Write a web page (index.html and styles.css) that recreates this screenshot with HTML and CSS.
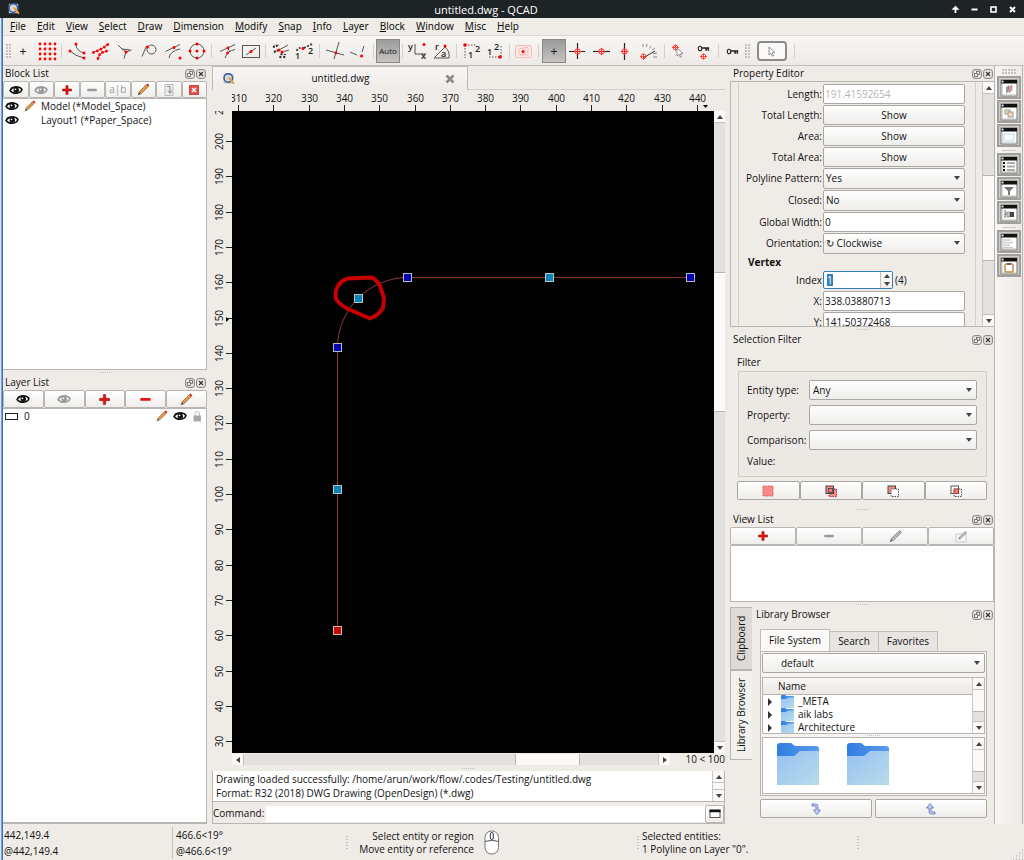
FILE: index.html
```html
<!DOCTYPE html>
<html lang="en">
<head>
<meta charset="utf-8">
<title>untitled.dwg - QCAD</title>
<link rel="stylesheet" href="styles.css">
</head>
<body>
<svg class="defs" aria-hidden="true">
  <defs>
    <linearGradient id="folderFront" x1="0" y1="0" x2="1" y2="1"><stop offset="0" stop-color="#98c1f3"/><stop offset="1" stop-color="#b6dcea"/></linearGradient>
    <linearGradient id="folderBack" x1="0" y1="0" x2="1" y2="0"><stop offset="0" stop-color="#2f7de0"/><stop offset="1" stop-color="#5b9bee"/></linearGradient>
    <symbol id="eye" viewBox="0 0 14 10"><path d="M1 5.500C3 1.600 10.500 .6 13 4.500 11.500 9 4 9.600 1 5.500Z" fill="none" stroke="currentColor" stroke-width="1.500"/><path d="M1 3.500C4 .3 10 .2 13.300 4.200L11 3Z" fill="currentColor"/><circle cx="7.300" cy="5.200" r="2.700" fill="currentColor"/><circle cx="6.500" cy="4.400" r=".8" fill="#fff"/></symbol>
    <symbol id="plus" viewBox="0 0 10 10"><path d="M3.900 .5h2.200v3.400h3.400v2.200H6.100v3.400H3.900V6.100H.5V3.900h3.400Z" fill="#e8100c" stroke="#8d1713" stroke-width=".5"/></symbol>
    <symbol id="minus" viewBox="0 0 10 10"><rect x=".3" y="3.700" width="9.400" height="2.500" rx=".5" fill="currentColor"/></symbol>
    <symbol id="pencil" viewBox="0 0 12 12"><path d="M.6 11.400 1.800 8.400 3.500 10.100Z" fill="#443"/><path d="M1.800 8.400 8.600 1.500 10.400 3.300 3.500 10.100Z" fill="#e89a45" stroke="#7d4f20" stroke-width=".6"/><path d="M8.600 1.500 9.800 .4 11.500 2.200 10.400 3.300Z" fill="#d3241d"/></symbol>
    <symbol id="pencilGray" viewBox="0 0 12 12"><path d="M.6 11.400 1.800 8.400 3.500 10.100Z" fill="#666"/><path d="M1.800 8.400 9.800 .4 11.500 2.200 3.500 10.100Z" fill="#bbb" stroke="#777" stroke-width=".7"/></symbol>
    <symbol id="float" viewBox="0 0 10 10"><rect x=".7" y=".7" width="8.600" height="8.600" rx="2" fill="none" stroke="#777"/><rect x="4.500" y="2.500" width="3" height="3" fill="none" stroke="#666" stroke-width=".8"/><rect x="2.500" y="4.500" width="3" height="3" fill="#eee" stroke="#666" stroke-width=".8"/></symbol>
    <symbol id="close" viewBox="0 0 10 10"><rect x=".7" y=".7" width="8.600" height="8.600" rx="2" fill="none" stroke="#777"/><path d="M3 3l4 4M7 3l-4 4" stroke="#333" stroke-width="1.200"/></symbol>
    <symbol id="folder" viewBox="0 0 42 42"><path d="M0 3Q0 0 3 0H14L18 3H39Q42 3 42 6V30H0Z" fill="url(#folderBack)"/><path d="M0 13H17L23 8H42V42H0Z" fill="url(#folderFront)"/></symbol>
    <symbol id="logo" viewBox="0 0 14 14"><rect x="2" y="2" width="9" height="9" fill="#d9d9dc" stroke="#9a9aa5" stroke-width=".5"/><circle cx="6.300" cy="6" r="4.300" fill="none" stroke="#2f5a9c" stroke-width="1.500"/><path d="M6 5l2 .5 4.500 5.500-1 1.500L6.500 7Z" fill="#e6a23a"/></symbol>
    <symbol id="target" viewBox="0 0 8 8"><circle cx="4" cy="4" r="2.700" fill="none" stroke="#f22" stroke-width=".9"/><path d="M0 4h8M4 .5v7" stroke="#f22" stroke-width=".9"/></symbol>
    <symbol id="key" viewBox="0 0 14 8"><ellipse cx="3" cy="4" rx="2" ry="2.600" fill="none" stroke="#222" stroke-width="1.300"/><path d="M5 3.500h8.500M10 3.500v3M12.500 3.500v3" stroke="#222" stroke-width="1.800"/></symbol>
    <symbol id="pointer" viewBox="0 0 8 11"><path d="M1 1v8l2-1.700 1.300 2.900 1.200-.6L4.300 6.800 7 6.500Z" fill="#fff" stroke="#777" stroke-width=".8"/></symbol>
    <symbol id="win" viewBox="0 0 18 18"><rect x="1" y="1" width="16" height="16" fill="#fff" stroke="#777"/><rect x="1" y="1" width="16" height="3.500" fill="#111"/><rect x="1.500" y="1.500" width="2" height="2" fill="#eee"/><path d="M2 5v11h14" stroke="#bbb" fill="none"/></symbol>
  </defs>
</svg>

<header class="titlebar">
  <svg class="app-icon" width="14" height="14"><use href="#logo"/></svg>
  <h1>untitled.dwg - QCAD</h1>
  <div class="window-buttons">
    <button aria-label="Keep above"><svg width="9" height="9"><path d="M4.500 .8 8.500 4.800H.5Z" fill="#fff"/><path d="M4.500 3v5" stroke="#fff" stroke-width="1.800"/></svg></button>
    <button aria-label="Minimize"><svg width="9" height="9"><path d="M1.500 4.500h6" stroke="#fff" stroke-width="2"/></svg></button>
    <button aria-label="Maximize"><svg width="9" height="9"><rect x="2" y="2" width="5" height="5" fill="none" stroke="#fff" stroke-width="1.600"/></svg></button>
    <button aria-label="Close"><svg width="9" height="9"><path d="M2 2l5 5M7 2 2 7" stroke="#fff" stroke-width="1.900"/></svg></button>
  </div>
</header>

<div class="window">
<nav class="menubar">
  <button><u>F</u>ile</button><button><u>E</u>dit</button><button><u>V</u>iew</button><button><u>S</u>elect</button><button><u>D</u>raw</button><button><u>D</u>imension</button><button><u>M</u>odify</button><button><u>S</u>nap</button><button><u>I</u>nfo</button><button><u>L</u>ayer</button><button><u>B</u>lock</button><button><u>W</u>indow</button><button><u>M</u>isc</button><button><u>H</u>elp</button>
</nav>

<div class="toolbar">
  <span class="grip"></span>
  <button aria-label="Free"><svg><path d="M7 10.500h6M10 7.500v6" stroke="#222"/></svg></button>
  <button aria-label="Grid"><svg><g stroke="#f00" stroke-width="2.800" stroke-linecap="round" stroke-dasharray="0 5"><path d="M3 3h16M3 8h16M3 13h16M3 18h16"/></g></svg></button>
  <i></i>
  <button aria-label="End points"><svg><g class="ln"><path d="M9 3Q9 10 17 12M3 10Q8 15 17 17"/></g><g class="dot"><circle cx="9" cy="3" r="1.500"/><circle cx="3" cy="10" r="1.500"/><circle cx="17" cy="12" r="1.500"/><circle cx="17" cy="17" r="1.500"/></g></svg></button>
  <button aria-label="On entity"><svg><path d="M2.500 11.500Q12 8 18 2.500M7 17.500Q8 11 17 10" fill="none" stroke="#c33" stroke-width="1"/><path d="M2.500 11.500Q12 8 18 2.500M7 17.500Q8 11 17 10" fill="none" stroke="#f00" stroke-width="2.800" stroke-linecap="round" stroke-dasharray="0 4"/></svg></button>
  <button aria-label="Perpendicular"><svg><path class="ln" d="M3 4 7 8 11 11 9 17.500M11 11 16.500 9M7 8l8 1"/><circle class="dot" cx="11" cy="11" r="1.500"/></svg></button>
  <button aria-label="Tangential"><svg><path class="ln" d="M3 15.500 7.500 5"/><circle class="ln" cx="12.500" cy="8.500" r="4.500"/><circle class="dot" cx="8.500" cy="6" r="1.500"/></svg></button>
  <button aria-label="Reference"><svg><path class="ln" d="M2.500 10.500 17 3.500M6 17Q7 10 17 8"/><circle class="dot" cx="11" cy="6.500" r="1.500"/><circle class="dot" cx="17" cy="17" r="1.500"/></svg></button>
  <button aria-label="Center"><svg><circle class="ln" cx="10" cy="10" r="7"/><g class="dot"><circle cx="10" cy="10" r="1.500"/><circle cx="10" cy="3" r="1.500"/><circle cx="10" cy="17" r="1.500"/><circle cx="3" cy="10" r="1.500"/><circle cx="17" cy="10" r="1.500"/></g></svg></button>
  <i></i>
  <button aria-label="Intersection"><svg><path class="ln" d="M3 10.500 18 3.500M8 17Q10 10 18 8.500M10 6l3 5"/><circle class="dot" cx="11" cy="7" r="1.400"/><circle class="dot" cx="10.500" cy="12" r="1.400"/></svg></button>
  <button aria-label="Middle"><svg><rect class="ln" x="1.500" y="4.500" width="17" height="12"/><path class="ln" d="M5 14 15 7"/><circle class="dot" cx="10" cy="10.500" r="1.500"/></svg></button>
  <i></i>
  <button aria-label="Intersection manual"><svg><path d="M2 6l6-2M3 11l5-2M9 17l2-5M13 17l1-4" stroke="#222" stroke-width="2" stroke-dasharray="2 1"/><path class="ln" d="M8 9 17 4M10 13Q12 10 18 9"/><circle class="dot" cx="8" cy="9" r="1.500"/><circle class="dot" cx="11" cy="11" r="1.500"/></svg></button>
  <button aria-label="Distance"><svg><path d="M2 10Q2 6 9 7M9 7 17 3" fill="none" stroke="#333" stroke-width="1.800" stroke-dasharray="2 1.500"/><circle class="dot" cx="8" cy="7.500" r="1.500"/><text x="0" y="18">1</text><text x="13" y="13">2</text></svg></button>
  <i></i>
  <button aria-label="Orthogonal intersection"><svg><path class="ln" d="M1 9l18 5M14 1 9 18"/><circle class="dot" cx="11" cy="12" r="1.400"/></svg></button>
  <button aria-label="Perpendicular foot"><svg><path class="ln" d="M1 11l7 3M15 5l-2 6"/><circle class="dot" cx="12.500" cy="15" r="1.500"/></svg></button>
  <i class="thin"></i>
  <button class="pressed auto">Auto</button>
  <i></i>
  <button aria-label="Coordinate"><svg><path class="ln" d="M7 3v10h11"/><text x="0" y="9">y</text><text x="13" y="18">x</text><circle class="dot" cx="16" cy="3.500" r="1.500"/></svg></button>
  <button aria-label="Polar"><svg><path class="ln" d="M2 17 13 6Q18 10 17 17Z"/><text x="3" y="9">r</text><text x="9" y="16">a</text><circle class="dot" cx="13" cy="5" r="1.500"/></svg></button>
  <i class="thin"></i>
  <button aria-label="Restrict one"><svg><path d="M4 4h11M4 4v13" stroke="#555" stroke-dasharray="1.500 1.500"/><text x="7" y="17">1</text><text x="14" y="11">2</text><circle class="dot" cx="4" cy="4" r="1.800"/></svg></button>
  <button aria-label="Restrict two"><svg><path d="M4 16h11M16 5v11" stroke="#555" stroke-dasharray="1.500 1.500"/><text x="2" y="14">1</text><text x="9" y="9">2</text><circle class="dot" cx="15" cy="16" r="1.800"/></svg></button>
  <i class="thin"></i>
  <button aria-label="Relative zero"><svg><rect x="1.500" y="4.500" width="16" height="12" rx="2" fill="#fdebe8" stroke="#f8b8b3"/><circle cx="8" cy="10.500" r="3.500" fill="none" stroke="#f8b5b0"/><path d="M10 6.500h4v7.500H6" fill="none" stroke="#f8b5b0"/><circle class="dot" cx="9" cy="10.500" r="1.500"/></svg></button>
  <i></i>
  <button class="pressed" aria-label="No restriction"><svg><path d="M7 10.500h6M10 7.500v6" stroke="#222"/></svg></button>
  <button aria-label="Orthogonal"><svg><path d="M1 10.500h16M9.500 2v16" stroke="#222" stroke-width="1.200"/><use href="#target" x="5.500" y="6.500" width="8" height="8"/></svg></button>
  <button aria-label="Horizontal"><svg><path d="M1 10.500h17" stroke="#222" stroke-width="1.200"/><use href="#target" x="5.500" y="6.500" width="8" height="8"/></svg></button>
  <button aria-label="Vertical"><svg><path d="M8.500 2v17" stroke="#222" stroke-width="1.200"/><use href="#target" x="4.500" y="6.500" width="8" height="8"/></svg></button>
  <button aria-label="Angle"><svg><path d="M3 17 15 10" stroke="#333"/><path d="M3 3v3M7 3 6.500 6M11 5 9.500 7.500M15 7l-3 2M17 16h-4M17 12l-4 1" stroke="#777" stroke-width=".8"/><use href="#target" x="0" y="12" width="7" height="7"/></svg></button>
  <i></i>
  <button aria-label="Pick"><svg><use href="#target" x="2" y="3" width="7" height="7"/><use href="#pointer" x="6" y="6" width="8" height="11"/></svg></button>
  <button aria-label="Lock relative zero"><svg><use href="#key" x="3" y="4" width="13" height="7"/><use href="#target" x="6" y="12" width="7" height="7"/></svg></button>
  <i class="thin"></i>
  <button aria-label="Lock"><svg><use href="#key" x="3" y="7" width="13" height="7"/></svg></button>
  <span class="grip"></span>
  <button class="select-tool" aria-label="Select"><svg><use href="#pointer" x="6" y="3" width="8" height="11"/></svg></button>
  <i></i>
</div>

<main>
  <aside class="dock left">
    <section class="panel block-list">
      <h2 class="dock-title"><span>Block List</span><button aria-label="Float"><svg><use href="#float"/></svg></button><button aria-label="Close"><svg><use href="#close"/></svg></button></h2>
      <div class="tool-row">
        <button aria-label="Show all"><svg width="14" height="10"><use href="#eye"/></svg></button>
        <button class="dim" aria-label="Hide all"><svg width="14" height="10"><use href="#eye"/></svg></button>
        <button aria-label="Add block"><svg width="10" height="10"><use href="#plus"/></svg></button>
        <button class="dim" aria-label="Remove block"><svg width="10" height="10"><use href="#minus"/></svg></button>
        <button class="dim">a|b</button>
        <button aria-label="Edit block"><svg width="13" height="13"><use href="#pencil"/></svg></button>
        <button aria-label="Insert block"><svg width="10" height="12"><rect x="1" y=".5" width="8" height="11" fill="#eee" stroke="#bbb"/><path d="M3 2.500h3v6M4 6.500l2 3 2-3" fill="none" stroke="#888"/></svg></button>
        <button aria-label="Close block"><svg width="10" height="10"><rect x=".5" y=".5" width="9" height="9" fill="#e6504c" stroke="#c94744"/><path d="M3 3l4 4M7 3 3 7" stroke="#fff" stroke-width="1.500"/></svg></button>
      </div>
      <ul class="list">
        <li><svg width="14" height="10"><use href="#eye"/></svg><svg width="12" height="12"><use href="#pencil"/></svg>Model (*Model_Space)</li>
        <li><svg width="14" height="10"><use href="#eye"/></svg><svg width="12" height="12"></svg>Layout1 (*Paper_Space)</li>
      </ul>
    </section>
    <div class="splitter"></div>
    <section class="panel layer-list">
      <h2 class="dock-title"><span>Layer List</span><button aria-label="Float"><svg><use href="#float"/></svg></button><button aria-label="Close"><svg><use href="#close"/></svg></button></h2>
      <div class="tool-row">
        <button aria-label="Show all layers"><svg width="14" height="10"><use href="#eye"/></svg></button>
        <button class="dim" aria-label="Hide all layers"><svg width="14" height="10"><use href="#eye"/></svg></button>
        <button aria-label="Add layer"><svg width="11" height="11"><use href="#plus"/></svg></button>
        <button class="red" aria-label="Remove layer"><svg width="11" height="11"><use href="#minus"/></svg></button>
        <button aria-label="Edit layer"><svg width="13" height="13"><use href="#pencil"/></svg></button>
      </div>
      <ul class="list">
        <li><svg width="14" height="9"><rect x=".5" y="1.500" width="12" height="6" fill="#fff" stroke="#222"/></svg><span class="grow">0</span><svg width="12" height="12"><use href="#pencil"/></svg><svg width="14" height="10"><use href="#eye"/></svg><svg width="10" height="12"><path d="M3 6V4a2.200 2.500 0 0 1 4.400 0v2" fill="none" stroke="#ccc" stroke-width="1.200"/><rect x="1.500" y="5.500" width="7.500" height="6" fill="#aaa"/></svg></li>
      </ul>
    </section>
  </aside>

  <div class="center">
    <div class="doc-tabs">
      <div class="doc-tab"><svg width="14" height="14"><use href="#logo"/></svg><span>untitled.dwg</span><button aria-label="Close tab"><svg width="10" height="10"><path d="M1.500 1.500l7 7M8.500 1.500l-7 7" stroke="#8a8a8a" stroke-width="2.600"/></svg></button></div>
    </div>
    <div class="view">
      <svg class="ruler-h" id="rulerH"></svg>
      <svg class="ruler-v" id="rulerV"></svg>
      <svg class="canvas">
        <path d="M105.500 520V237A70.500 70.500 0 0 1 176 166.500H459" fill="none" stroke="#8c3a36"/>
        <path d="M116 167.500 140 166.500Q145 169 148 175L152 187 151 197Q147 204 138 207.500L116 198Q108 194 104 188 103 180 105 177 108 170 116 167.500Z" fill="none" stroke="#c80000" stroke-width="4" stroke-linejoin="round"/>
        <g stroke="#b9b9b9" fill="#0000b4"><rect x="171.500" y="162.500" width="8" height="8"/><rect x="454.500" y="162.500" width="8" height="8"/><rect x="101.500" y="232.500" width="8" height="8"/></g>
        <g stroke="#b9c4c4" fill="#0a84b8"><rect x="313.500" y="162.500" width="8" height="8"/><rect x="122.500" y="183.500" width="8" height="8"/><rect x="101.500" y="374.500" width="8" height="8"/></g>
        <rect x="101.500" y="515.500" width="8" height="8" fill="#c80808" stroke="#c9b9b0"/>
      </svg>
      <div class="scroll v canvas-v"><b class="up"></b><span><em></em></span><b class="down"></b></div>
      <div class="hbar">
        <div class="scroll h"><b class="prev"></b><span><em></em></span><b class="next"></b></div>
        <output>10 &lt; 100</output>
      </div>
    </div>
    <div class="splitter"></div>
    <div class="console">
      <div class="log"><p>Drawing loaded successfully: /home/arun/work/flow/.codes/Testing/untitled.dwg<br>Format: R32 (2018) DWG Drawing (OpenDesign) (*.dwg)</p>
        <div class="scroll v"><b class="up"></b><span><em></em></span><b class="down"></b></div></div>
      <div class="command"><label for="cmd">Command:</label><input id="cmd" type="text"><button aria-label="Toggle"><svg width="12" height="10"><rect x="1" y="1" width="10" height="7.500" fill="#fff" stroke="#555"/><path d="M.5 2h11" stroke="#111" stroke-width="2.500"/></svg></button></div>
    </div>
  </div>

  <aside class="dock right">
    <section class="panel props">
      <h2 class="dock-title"><span>Property Editor</span><button aria-label="Float"><svg><use href="#float"/></svg></button><button aria-label="Close"><svg><use href="#close"/></svg></button></h2>
      <div class="prop-area">
        <form class="prop-form">
          <label for="len">Length:</label><input id="len" type="text" value="191.41592654" disabled>
          <label for="tl">Total Length:</label><button type="button" id="tl">Show</button>
          <label for="ar">Area:</label><button type="button" id="ar">Show</button>
          <label for="ta">Total Area:</label><button type="button" id="ta">Show</button>
          <label for="pp">Polyline Pattern:</label><span class="combo"><select id="pp"><option>Yes</option></select></span>
          <label for="cl">Closed:</label><span class="combo"><select id="cl"><option>No</option></select></span>
          <label for="gw">Global Width:</label><input id="gw" type="text" value="0">
          <label for="or">Orientation:</label><span class="combo"><select id="or"><option>↻ Clockwise</option></select></span>
          <h3>Vertex</h3>
          <label for="ix">Index</label><span class="spin-row"><span class="spin"><input id="ix" type="text" value="1"><span class="steps"><button type="button" aria-label="Up"></button><button type="button" aria-label="Down" class="dn"></button></span></span>(4)</span>
          <label for="px">X:</label><input id="px" type="text" value="338.03880713">
          <label for="py">Y:</label><input id="py" type="text" value="141.50372468">
        </form>
        <div class="scroll v"><b class="up"></b><span><em></em></span><b class="down"></b></div>
      </div>
    </section>
    <div class="splitter"></div>
    <section class="panel filter">
      <h2 class="dock-title"><span>Selection Filter</span><button aria-label="Float"><svg><use href="#float"/></svg></button><button aria-label="Close"><svg><use href="#close"/></svg></button></h2>
      <h3>Filter</h3>
      <div class="group">
        <label for="et">Entity type:</label><span class="combo"><select id="et"><option>Any</option></select></span>
        <label for="pr">Property:</label><span class="combo"><select id="pr"><option></option></select></span>
        <label for="co">Comparison:</label><span class="combo"><select id="co"><option></option></select></span>
        <span>Value:</span>
      </div>
      <div class="filter-buttons">
        <button aria-label="Select"><svg width="12" height="12"><rect x="1" y="1" width="10" height="10" fill="#f98a88" stroke="#c55" stroke-dasharray="1.500 1"/></svg></button>
        <button aria-label="Add"><svg width="12" height="12"><rect x="4" y="4" width="7.500" height="7.500" fill="#f98a88" stroke="#a33" stroke-dasharray="1.500 1"/><rect x="1" y="1" width="7.500" height="7.500" fill="#f98a88" stroke="#444"/><rect x="3.500" y="3.500" width="4" height="4" fill="#f87470" stroke="#444" stroke-width=".8"/></svg></button>
        <button aria-label="Subtract"><svg width="12" height="12"><rect x="1" y="1" width="7.500" height="7.500" fill="#f98a88" stroke="#444"/><rect x="4" y="4" width="7.500" height="7.500" fill="#fff" stroke="#555" stroke-dasharray="1.500 1"/></svg></button>
        <button aria-label="Intersect"><svg width="12" height="12"><rect x="1" y="1" width="7.500" height="7.500" fill="#fff" stroke="#555"/><rect x="4" y="4" width="7.500" height="7.500" fill="none" stroke="#555" stroke-dasharray="1.500 1"/><rect x="4" y="4" width="4.500" height="4.500" fill="#f87470" stroke="#a33" stroke-width=".8"/></svg></button>
      </div>
    </section>
    <div class="splitter"></div>
    <section class="panel views">
      <h2 class="dock-title"><span>View List</span><button aria-label="Float"><svg><use href="#float"/></svg></button><button aria-label="Close"><svg><use href="#close"/></svg></button></h2>
      <div class="tool-row">
        <button aria-label="Add view"><svg width="10" height="10"><use href="#plus"/></svg></button>
        <button class="dim" aria-label="Remove view"><svg width="10" height="10"><use href="#minus"/></svg></button>
        <button aria-label="Edit view"><svg width="13" height="13"><use href="#pencilGray"/></svg></button>
        <button aria-label="Restore view"><svg width="13" height="13"><rect x="1" y="4" width="10" height="8" fill="#f6f6f6" stroke="#ccc"/><use href="#pencilGray" x="3" y="1" width="9" height="9"/></svg></button>
      </div>
      <div class="list"></div>
    </section>
    <div class="splitter"></div>
    <section class="lib">
      <div class="side-tabs"><button>Clipboard</button><button class="on">Library Browser</button></div>
      <div class="lib-body">
        <h2 class="dock-title"><span>Library Browser</span><button aria-label="Float"><svg><use href="#float"/></svg></button><button aria-label="Close"><svg><use href="#close"/></svg></button></h2>
        <div class="tabs"><button class="on">File System</button><button>Search</button><button>Favorites</button></div>
        <div class="pane">
          <span class="combo"><select aria-label="Library"><option>default</option></select></span>
          <div class="tree">
            <div class="tree-main"><div class="tree-head">Name</div>
              <ul><li><svg width="13" height="13"><use href="#folder"/></svg>_META</li><li><svg width="13" height="13"><use href="#folder"/></svg>aik labs</li><li><svg width="13" height="13"><use href="#folder"/></svg>Architecture</li></ul></div>
            <div class="scroll v"><b class="up"></b><span><em></em></span><b class="down"></b></div>
          </div>
          <div class="splitter"></div>
          <div class="tree icons">
            <div class="tree-main"><svg width="42" height="42"><use href="#folder"/></svg><svg width="42" height="42"><use href="#folder"/></svg></div>
            <div class="scroll v"><b class="up"></b><span><em></em></span><b class="down"></b></div>
          </div>
        </div>
        <div class="lib-buttons">
          <button aria-label="Insert"><svg width="12" height="12"><path d="M2 1h3.500q2.500 0 2.500 2.500V7h2.500L7 11.500 3.500 7H6V4q0-1-1-1H2Z" fill="#c3d0f7" stroke="#5a6fb5" stroke-width=".8"/></svg></button>
          <button aria-label="Go up"><svg width="12" height="12"><path d="M10 11H6.500Q4 11 4 8.500V5H1.500L5 .5 8.500 5H6v3q0 1 1 1h3Z" fill="#c3d0f7" stroke="#5a6fb5" stroke-width=".8"/></svg></button>
        </div>
      </div>
    </section>
  </aside>

  <div class="widget-bar">
    <span class="grip flat"></span>
    <button aria-label="Layer list"><svg><use href="#win"/><path d="M6 8l3-2v6l-3 3Z" fill="#999"/><path d="M9 8l3-2v5l-3 3Z" fill="#e99" stroke="#777" stroke-width=".5"/></svg></button>
    <button aria-label="Block list"><svg><use href="#win"/><rect x="5" y="7" width="5" height="4" fill="#e8e2c0" stroke="#998"/><rect x="8" y="9" width="5" height="5" fill="#ead9c5" stroke="#a98"/></svg></button>
    <button aria-label="View list"><svg><use href="#win"/><rect x="4" y="7" width="10" height="7" fill="#f4fbff" stroke="#c3dbe6"/></svg></button>
    <hr>
    <button aria-label="Property editor"><svg><use href="#win"/><path d="M3 7h2M3 10.500h2M3 14h2" stroke="#111" stroke-width="2"/><path d="M7 7h8M7 10.500h8M7 14h8" stroke="#aaa" stroke-width="2"/></svg></button>
    <button aria-label="Selection filter"><svg><use href="#win"/><path d="M4 7h10l-4 4v4H8v-4Z" fill="#777"/></svg></button>
    <button aria-label="Library browser"><svg><use href="#win"/><path d="M5 6v8M5 10h3" stroke="#666"/><rect x="7" y="8" width="3" height="5" fill="#ccc" stroke="#666" stroke-width=".6"/><rect x="10" y="8" width="4" height="5" fill="#444"/></svg></button>
    <hr>
    <button aria-label="Command line"><svg><use href="#win"/><path d="M3 7h8M3 9.500h10M3 12h7M3 14.500h10" stroke="#ccc" stroke-width="1.500"/></svg></button>
    <button aria-label="Clipboard"><svg><use href="#win"/><rect x="5" y="7" width="8" height="8" rx="1" fill="#fff" stroke="#c98a3c" stroke-width="1.500"/><rect x="7" y="6" width="4" height="2" fill="#666"/></svg></button>
  </div>
</main>

<footer class="status">
  <p class="abs">442,149.4<br>@442,149.4</p>
  <p class="polar">466.6&lt;19°<br>@466.6&lt;19°</p>
  <div class="hint"><span class="vgrip"></span><p>Select entity or region<br>Move entity or reference</p><svg width="16" height="26"><rect x="1" y="1" width="13.500" height="23" rx="6.500" fill="#fff" stroke="#777"/><path d="M1 11.500Q8 9 14.500 11.500" fill="none" stroke="#555"/><rect x="6.300" y="2.500" width="3" height="7" rx="1.500" fill="#fff" stroke="#333"/></svg></div>
  <div class="sel"><span class="vgrip"></span><p>Selected entities:<br>1 Polyline on Layer "0".</p><span class="vgrip"></span></div>
  <svg class="size-grip" width="12" height="12"><path d="M1 11h11M4 8h8M7 5h5M10 2h2" stroke="#aaa" stroke-dasharray="1 2"/></svg>
</footer>
</div>
<script src="rulers.js"></script>
</body>
</html>
```

FILE: rulers.js
```js
const unit = 35.3;

function rulerMark(value, pos, vertical) {
  const label = vertical
    ? `<text transform="translate(11 ${pos}) rotate(-90)">${value}</text>`
    : `<text x="${pos}" y="12">${value}</text>`;
  const tick = vertical ? `M14 ${pos}h6` : `M${pos} 15v6`;
  return `${label}<path d="${tick}" stroke="#222"/>`;
}

let marks = '';
for (let v = 310; v <= 440; v += 10) {
  marks += rulerMark(v, Math.round((v - 310) / 10 * unit + 6) + 0.5, false);
}
marks += '<path d="M471 15h5l-2.500 3Z"/>';
document.getElementById('rulerH').innerHTML = marks;

marks = '';
for (let v = 210; v >= 30; v -= 10) {
  marks += rulerMark(v, Math.round((200 - v) / 10 * unit + 30) + 0.5, true);
}
marks += '<path d="M14 206v5l3-2.500Z"/>';
document.getElementById('rulerV').innerHTML = marks;
```

FILE: styles.css
```css
:root { --bg: #efebe7; --edge: #b9b5b1; --line: #aaa6a2; --face: linear-gradient(#fefefe, #efeeec); }
* { box-sizing: border-box; }
body { margin: 0; height: 100vh; display: flex; flex-direction: column; overflow: hidden; font: 10px/13px "Open Sans", "Noto Sans", sans-serif; color: #111; background: var(--bg); }
.defs { position: absolute; width: 0; height: 0; }
h1, h2, h3, p, ul { margin: 0; padding: 0; font: inherit; list-style: none; }
button, input, select { font: inherit; color: inherit; margin: 0; padding: 0; min-width: 0; border: 0; border-radius: 0; background: none; }
svg { display: block; flex: none; }

.titlebar { flex: none; height: 18px; background: #1e2326; color: #fff; display: grid; grid-template-columns: 1fr auto 1fr; align-items: center; padding: 0 7px; }
.titlebar h1 { font-size: 11px; padding-right: 52px; }
.window-buttons { display: flex; gap: 10px; justify-content: flex-end; }
.window { flex: 1; min-height: 0; display: flex; flex-direction: column; padding-left: 3px; background: linear-gradient(90deg, #dfe8f4 0 1px, #6fa0e2 1px 2px, #4470b8 2px 3px, transparent 3px); }

.menubar { flex: none; height: 18px; display: flex; align-items: center; gap: 11px; padding-left: 7px; border-bottom: 1px solid #dcd8d4; font-family: "Noto Sans", sans-serif; }

.toolbar { flex: none; height: 30px; display: flex; align-items: center; padding-left: 3px; background: linear-gradient(#f8f6f4, #edeae6); border-bottom: 1px solid #c2beba; }
.toolbar button { width: 24px; height: 24px; display: grid; place-items: center; }
.toolbar svg { width: 20px; height: 20px; overflow: visible; }
.toolbar text { font-size: 9px; fill: #222; font-weight: 600; }
.toolbar i { width: 1px; height: 14px; margin: 0 3px 0 2px; background: #d3cfcb; }
.toolbar .thin { margin: 0 2px; }
.toolbar .pressed { background: linear-gradient(#9b9b9b, #c6c4c2); border: 1px solid #8a8886; }
.toolbar .auto { font-size: 8px; }
.toolbar .select-tool { width: 30px; height: 20px; border: 2px solid #8b8b8b; border-radius: 4px; background: #faf9f8; margin: 0 5px 0 7px; }
.toolbar .select-tool svg { height: 16px; }
.ln { fill: none; stroke: #555; stroke-width: 1; }
.dot { fill: #f00; }
.grip { width: 5px; height: 14px; background: radial-gradient(circle at 1px 1px, #c5c1bd 1px, transparent 1px) 0 0 / 3px 3px; }

main { flex: 1; min-height: 0; display: flex; }
.dock { display: flex; flex-direction: column; }
.left { width: 204px; flex: none; }
.right { width: 265px; flex: none; margin-left: 5px; border-right: 1px solid var(--edge); }
.panel { display: flex; flex-direction: column; flex: none; }
.layer-list { flex: 1; min-height: 0; }
.dock-title { flex: none; height: 15px; display: flex; align-items: center; gap: 1px; padding: 0 1px 0 3px; }
.left .dock-title { padding-left: 2px; }
.dock-title span { flex: 1; }
.dock-title svg { width: 10px; height: 10px; }
.splitter { flex: none; height: 5px; background: repeating-linear-gradient(90deg, #c2beba 0 1px, transparent 1px 2px) center / 13px 1px no-repeat; }
.tool-row { flex: none; height: 18px; display: flex; }
.tool-row button { flex: 1; display: grid; place-items: center; background: var(--face); border: 1px solid var(--edge); border-radius: 2px; }
.dim { color: #999; }
.red { color: #e8150f; }
.list { flex: 1; min-height: 0; background: #fff; border: 1px solid var(--edge); border-left: 0; }
.list li { height: 14px; display: flex; align-items: center; gap: 5px; padding: 0 4px 0 2px; }
.grow { flex: 1; }
.block-list { height: 304px; }
.block-list .tool-row { height: 17px; }
.layer-list { border-bottom: 1px solid var(--edge); }

.center { flex: 1; min-width: 0; margin-left: 5px; display: flex; flex-direction: column; }
.doc-tabs { flex: none; height: 24px; border-bottom: 1px solid #d2ceca; }
.doc-tab { width: 256px; height: 24px; display: flex; align-items: center; padding: 0 12px 0 9px; border: 1px solid #bdb9b5; border-bottom: 0; background: linear-gradient(#f8f6f4, var(--bg)); }
.doc-tab span { flex: 1; text-align: center; }
.view { flex: 1; min-height: 0; display: grid; grid-template: 21px minmax(0, 1fr) 13px / 20px minmax(0, 1fr) 11px; }
.ruler-h { grid-area: 1 / 2 / 2 / 3; width: 100%; height: 21px; }
.ruler-v { grid-area: 2 / 1 / 3 / 2; width: 20px; height: 100%; }
.ruler-h text, .ruler-v text { text-anchor: middle; fill: #111; }
.canvas { grid-area: 2 / 2 / 3 / 3; width: 100%; height: 100%; background: #000; }
.canvas-v { grid-area: 2 / 3 / 3 / 4; }
.hbar { grid-area: 3 / 2 / 4 / 4; display: flex; justify-content: space-between; align-items: center; }
.hbar .scroll { width: 438px; height: 11px; }

.scroll { flex: none; display: flex; background: #e3e1de; }
.scroll.v { width: 12px; flex-direction: column; border-left: 1px solid #cbc7c3; }
.canvas-v.scroll { width: 11px; border-left: 0; }
.scroll b { flex: none; width: 11px; height: 11px; display: grid; place-items: center; background: #faf9f8; }
.scroll b::before, .combo::after, .steps button::before { content: ""; border: 3px solid transparent; }
.scroll .up::before, .steps button::before { border-top: 0; border-bottom: 4px solid #444; }
.scroll .down::before, .combo::after, .steps .dn::before { border-bottom: 0; border-top: 4px solid #444; }
.scroll .prev::before { border-left: 0; border-right: 4px solid #444; }
.scroll .next::before { border-right: 0; border-left: 4px solid #444; }
.scroll span { flex: 1; display: flex; flex-direction: column; border: solid #c5c1bd; border-width: 1px 0; }
.scroll.h span { flex-direction: row; border-width: 0 1px; }
.scroll em { background: #fbfaf9; border: solid #b9b5b1; border-width: 1px 0; }
.canvas-v span { padding-top: 149px; }
.canvas-v em { height: 140px; }
.hbar span { padding-left: 271px; }
.hbar em { width: 65px; border-width: 0 1px; }

.console { flex: none; border: 1px solid var(--edge); border-top: 0; }
.log { height: 31px; display: flex; background: #fff; border-bottom: 1px solid var(--edge); }
.log p { flex: 1; padding: 1px 3px; line-height: 14px; white-space: nowrap; }
.log em { flex: 1; border: 0; }
.command { height: 21px; display: flex; align-items: center; padding-top: 2px; }
.command input { flex: 1; height: 16px; margin-left: 2px; background: #fff; }
.command button { width: 19px; height: 18px; display: grid; place-items: center; border: 1px solid var(--edge); background: var(--face); border-radius: 2px; }

.prop-area { height: 246px; display: flex; overflow: hidden; border: 1px solid var(--edge); border-right: 0; }
.prop-area .scroll span { padding-top: 81px; }
.prop-area em { height: 86px; }
.prop-form { flex: 1; display: grid; grid-template-columns: 83px minmax(0, 1fr); column-gap: 1px; row-gap: 1px; align-content: start; align-items: center; margin: 0 6px 0 7px; padding: 2px 10px 0 0; border: solid #d3cfcb; border-width: 0 1px; }
.prop-form label { text-align: right; white-space: nowrap; }
.prop-form > input, .prop-form > button { width: 100%; height: 20px; border: 1px solid var(--line); border-radius: 2px; background: #fff; padding: 0 1px; }
.prop-form > button { background: var(--face); }
.prop-form input:disabled { color: #b5b5b5; }
.prop-form h3 { grid-column: 1 / 3; font-weight: 700; height: 14px; line-height: 14px; padding-left: 9px; }
.combo { position: relative; display: block; }
.combo::after { position: absolute; right: 5px; top: 8px; pointer-events: none; }
.combo select { display: block; appearance: none; width: 100%; height: 20px; padding: 0 3px; border: 1px solid var(--line); border-radius: 2px; background: var(--face); }
.prop-form select { height: 21px; padding: 0 2px; }
.spin-row { display: flex; align-items: center; gap: 2px; height: 20px; }
.spin { width: 70px; height: 18px; display: flex; border: 1px solid #2f7fb8; border-radius: 2px; background: #fff; }
.spin input { flex: 1; color: #fff; padding-left: 3px; background: linear-gradient(#2f80bd, #2f80bd) 3px 2px / 6px 12px no-repeat; }
.steps { width: 12px; display: flex; flex-direction: column; border-left: 1px solid #c5c1bd; background: var(--face); }
.steps button { flex: 1; display: grid; place-items: center; }

.filter h3 { padding-left: 7px; margin: 9px 0 2px; }
.group { display: grid; grid-template-columns: 59px minmax(0, 1fr); gap: 5px 3px; align-items: center; height: 106px; align-content: start; margin: 0 7px 0 8px; padding: 8px 9px 0 8px; border: 1px solid #d0ccc8; background: #ece8e4; }
.filter-buttons { height: 19px; display: flex; margin: 4px 7px 7px; }
.filter-buttons button, .lib-buttons button { flex: 1; display: grid; place-items: center; background: var(--face); border: 1px solid var(--line); border-radius: 2px; }
.views .list { height: 57px; flex: none; border-left: 1px solid var(--edge); }

.lib { flex: 1; min-height: 0; display: flex; }
.side-tabs { width: 22px; flex: none; display: flex; flex-direction: column; }
.side-tabs button { writing-mode: vertical-rl; rotate: 180deg; width: 22px; height: 63px; display: grid; place-items: center; border: 1px solid var(--edge); border-left: 0; background: #dedad7; }
.side-tabs .on { height: 90px; background: #f3f1ee; }
.lib-body { flex: 1; min-width: 0; }
.lib-body .dock-title { padding-left: 4px; }
.tabs { display: flex; align-items: flex-end; margin: 7px 0 0 8px; }
.tabs button { height: 20px; padding: 0 8px; border: 1px solid #c2beba; border-left: 0; border-bottom: 0; background: #e7e4e1; }
.tabs .on { height: 22px; border-left: 1px solid #c2beba; background: #fbfaf9; }
.pane { margin: 0 7px 0 8px; padding: 1px; border: 1px solid var(--edge); background: #f6f4f2; }
.pane select { padding-left: 18px; }
.tree { display: flex; height: 57px; margin-top: 4px; overflow: hidden; border: 1px solid var(--edge); background: #fff; }
.tree-main { flex: 1; overflow: hidden; }
.tree-head { height: 17px; padding-left: 15px; line-height: 16px; background: linear-gradient(#f8f7f6, #eae7e4); border-bottom: 1px solid var(--edge); }
.tree li { display: flex; align-items: center; height: 13px; gap: 4px; padding-left: 5px; }
.tree li::before { content: ""; border: 4px solid transparent; border-left-color: #333; border-right: 0; margin-right: 5px; }
.tree em { height: 22px; border-top: 0; }
.pane .splitter { height: 3px; }
.tree.icons { margin: 0; }
.icons .tree-main { display: flex; gap: 28px; padding: 5px 0 0 14px; }
.lib-buttons { height: 19px; display: flex; gap: 3px; margin: 3px 7px 0 8px; }

.widget-bar { flex: 1 0 25px; max-width: 28px; display: flex; flex-direction: column; align-items: center; gap: 1px; padding-top: 3px; margin-right: 1px; background: linear-gradient(90deg, #f8f6f3, #edeae6); border-right: 1px solid var(--edge); }
.widget-bar button { flex: none; width: 24px; height: 23px; display: grid; place-items: center; border: 2px solid #a19f9d; background: #cfcdcb; }
.widget-bar svg { width: 18px; height: 18px; }
.widget-bar hr { width: 14px; height: 1px; border: 0; background: #ccc8c4; margin: 2px 0 1px; }
.grip.flat { width: 14px; height: 5px; margin-bottom: 1px; }

.status { flex: none; height: 36px; display: flex; align-items: center; line-height: 13px; white-space: nowrap; padding: 1px 0 0 1px; }
.abs, .polar { width: 170px; line-height: 16px; }
.abs { border-right: 1px solid #c5c1bd; width: 169px; margin-right: 3px; }
.vgrip { width: 2px; height: 14px; background: repeating-linear-gradient(#c0bcb8 0 1px, transparent 1px 3px); }
.hint, .sel { display: flex; align-items: center; }
.hint { width: 154px; gap: 10px; flex: none; justify-content: space-between; }
.hint p { text-align: right; flex: 1; }
.sel { width: 222px; gap: 3px; margin-left: 137px; }
.sel p { flex: 1; }
.size-grip { margin-left: auto; align-self: flex-end; }
```
